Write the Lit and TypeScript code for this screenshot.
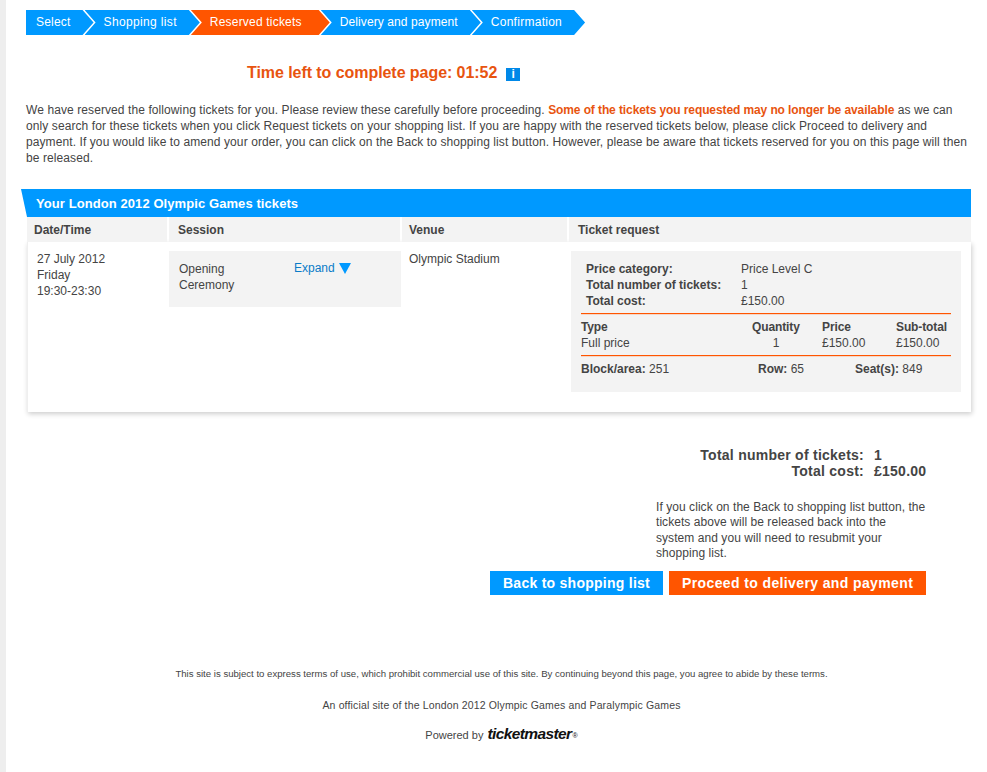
import { LitElement, html, css } from "lit";
import { customElement } from "lit/decorators.js";

const STEPS = ["Select", "Shopping list", "Reserved tickets", "Delivery and payment", "Confirmation"];

@customElement("app-root")
export class AppRoot extends LitElement {
  static styles = css`
    :host {
      display: block;
      min-height: 772px;
      box-sizing: border-box;
      border-left: 6px solid #eeeeee;
      background: #fff;
      font: 12px/16px "Liberation Sans", Arial, sans-serif;
      color: #444;
      overflow: hidden;
    }
    .steps { display: flex; margin: 10px 0 0 20px; }
    .step {
      height: 25px;
      line-height: 25px;
      color: #fff;
      background: #0099ff;
      padding: 0 23px 0 19px;
      margin-left: -9px;
      letter-spacing: 0.2px;
      clip-path: polygon(0 0, calc(100% - 11px) 0, 100% 50%, calc(100% - 11px) 100%, 0 100%, 11px 50%);
    }
    .step:first-child {
      margin-left: 0;
      padding-left: 10px;
      clip-path: polygon(0 0, calc(100% - 11px) 0, 100% 50%, calc(100% - 11px) 100%, 0 100%);
    }
    .step:nth-child(2) { letter-spacing: 0.35px; }
    .step:nth-child(4) { letter-spacing: 0.1px; }
    .step:last-child { letter-spacing: 0.27px; }
    .step.on { background: #ff5500; padding-right: 28px; }
    .timer {
      display: flex;
      align-items: center;
      gap: 9px;
      margin: 28px 0 0 241px;
      height: 20px;
      font-size: 16px;
      font-weight: bold;
      letter-spacing: -0.06px;
      color: #e8540f;
    }
    .info {
      width: 14px;
      height: 13px;
      margin-top: 2px;
      background: #0088e8;
      color: #fff;
      font: bold 12px/13px "Liberation Sans", sans-serif;
      letter-spacing: 0;
      text-align: center;
    }
    .intro { margin: 19px 0 0 20px; white-space: nowrap; letter-spacing: 0.09px; }
    .intro b { color: #e8540f; letter-spacing: -0.1px; }
    .panel { margin: 23px 16px 0 15px; }
    .title {
      height: 28px;
      line-height: 29px;
      padding-left: 15px;
      background: #0099ff;
      color: #fff;
      font-size: 13px;
      font-weight: bold;
      letter-spacing: 0.08px;
      clip-path: polygon(0 0, 100% 0, 100% 100%, 6px 100%);
    }
    .cols { display: grid; grid-template-columns: 142px 233px 167px 1fr; margin-left: 6px; }
    .th {
      height: 25px;
      line-height: 26px;
      background: #f3f3f3;
      font-weight: bold;
      padding-left: 7px;
      margin-right: 2px;
    }
    .th:nth-child(2), .th:nth-child(4) { padding-left: 9px; }
    .th:last-child { margin-right: 0; }
    .card {
      margin-left: 6px;
      height: 170px;
      box-sizing: border-box;
      padding-top: 9px;
      background: #fff;
      box-shadow: 1px 2px 5px rgba(0, 0, 0, 0.2);
      border-left: 1px solid #efefef;
    }
    .card .cols { margin-left: -1px; align-items: start; }
    .date { padding-left: 10px; }
    .session {
      display: flex;
      height: 56px;
      box-sizing: border-box;
      padding: 10px;
      margin-right: 1px;
      background: #f3f3f3;
    }
    .name { width: 115px; }
    .expand { display: flex; align-items: flex-start; gap: 4px; color: #0a7cc8; margin-top: -1px; }
    .expand svg { margin-top: 3px; }
    .venue { padding-left: 7px; }
    .ticket {
      margin: 0 10px 0 2px;
      height: 141px;
      box-sizing: border-box;
      padding: 10px;
      background: #f3f3f3;
    }
    .summary {
      display: grid;
      grid-template-columns: 155px 1fr;
      padding: 0 0 4px 5px;
      border-bottom: 1px solid #ff5500;
      box-shadow: 0 1px 0 rgba(255, 85, 0, 0.18);
    }
    b { font-weight: bold; }
    .lines {
      display: grid;
      grid-template-columns: 171px 48px 22px 74px 1fr;
      padding: 5px 0 4px;
      border-bottom: 1px solid #ff5500;
      box-shadow: 0 1px 0 rgba(255, 85, 0, 0.18);
    }
    .lines b { letter-spacing: -0.12px; }
    .mid { text-align: center; }
    .seats { display: grid; grid-template-columns: 177px 97px 1fr; padding-top: 5px; }
    .aside { margin-left: 650px; width: 280px; }
    .totals {
      display: grid;
      grid-template-columns: auto auto;
      justify-content: start;
      column-gap: 10px;
      margin: 35px 0 0 0;
      font-size: 14px;
      font-weight: bold;
      letter-spacing: 0.25px;
      color: #444;
      width: 270px;
    }
    .totals span:nth-child(odd) { text-align: right; width: 208px; }
    .note { margin-top: 21px; white-space: nowrap; line-height: 15.4px; letter-spacing: 0.06px; }
    .buttons { display: flex; gap: 6px; margin: 9px 0 0 484px; }
    .btn {
      height: 24px;
      line-height: 24px;
      padding: 0 13px;
      font-size: 14px;
      font-weight: bold;
      color: #fff;
      letter-spacing: 0.26px;
      background: #0099ff;
    }
    .btn.go { background: #ff5500; letter-spacing: 0.38px; }
    .foot { margin: 72px 0 0 10px; text-align: center; font-size: 9.6px; line-height: 14px; }
    .foot p { margin: 0; }
    .foot .site { margin-top: 17px; font-size: 10.5px; letter-spacing: 0.15px; }
    .foot .power { margin-top: 14px; display: flex; justify-content: center; align-items: baseline; gap: 4px; font-size: 11px; }
    .tm { font: italic bold 15.5px/16px "Liberation Sans", sans-serif; color: #111; letter-spacing: -0.6px; }
    .tm sup { font-size: 7px; font-style: normal; font-weight: normal; vertical-align: 1px; letter-spacing: 0; margin-left: 1px; }
  `;

  render() {
    return html`
      <div class="steps">
        ${STEPS.map((s, i) => html`<div class="step ${i === 2 ? "on" : ""}">${s}</div>`)}
      </div>
      <div class="timer">
        <span>Time left to complete page: 01:52</span><span class="info">i</span>
      </div>
      <div class="intro">
        We have reserved the following tickets for you. Please review these carefully before proceeding. <b>Some of the tickets you requested may no longer be available</b> as we can<br />
        only search for these tickets when you click Request tickets on your shopping list. If you are happy with the reserved tickets below, please click Proceed to delivery and<br />
        payment. If you would like to amend your order, you can click on the Back to shopping list button. However, please be aware that tickets reserved for you on this page will then<br />
        be released.
      </div>
      <div class="panel">
        <div class="title">Your London 2012 Olympic Games tickets</div>
        <div class="cols">
          <div class="th">Date/Time</div>
          <div class="th">Session</div>
          <div class="th">Venue</div>
          <div class="th">Ticket request</div>
        </div>
        <div class="card">
          <div class="cols">
            <div class="date">27 July 2012<br />Friday<br />19:30-23:30</div>
            <div class="session">
              <div class="name">Opening<br />Ceremony</div>
              <div class="expand">
                <span>Expand</span>
                <svg width="12" height="11" viewBox="0 0 12 11"><path d="M0 0H12L6 11Z" fill="#0099ff" /></svg>
              </div>
            </div>
            <div class="venue">Olympic Stadium</div>
            <div class="ticket">
              <div class="summary">
                <b>Price category:</b><span>Price Level C</span>
                <b>Total number of tickets:</b><span>1</span>
                <b>Total cost:</b><span>£150.00</span>
              </div>
              <div class="lines">
                <b>Type</b><b>Quantity</b><span></span><b>Price</b><b>Sub-total</b>
                <span>Full price</span><span class="mid">1</span><span></span><span>£150.00</span><span>£150.00</span>
              </div>
              <div class="seats">
                <span><b>Block/area:</b> 251</span>
                <span><b>Row:</b> 65</span>
                <span><b>Seat(s):</b> 849</span>
              </div>
            </div>
          </div>
        </div>
      </div>
      <div class="aside">
        <div class="totals">
          <span>Total number of tickets:</span><span>1</span>
          <span>Total cost:</span><span>£150.00</span>
        </div>
        <div class="note">
          If you click on the Back to shopping list button, the<br />
          tickets above will be released back into the<br />
          system and you will need to resubmit your<br />
          shopping list.
        </div>
      </div>
      <div class="buttons">
        <div class="btn">Back to shopping list</div>
        <div class="btn go">Proceed to delivery and payment</div>
      </div>
      <div class="foot">
        <p>This site is subject to express terms of use, which prohibit commercial use of this site. By continuing beyond this page, you agree to abide by these terms.</p>
        <p class="site">An official site of the London 2012 Olympic Games and Paralympic Games</p>
        <div class="power"><span>Powered by</span><span class="tm">ticketmaster<sup>®</sup></span></div>
      </div>
    `;
  }
}
